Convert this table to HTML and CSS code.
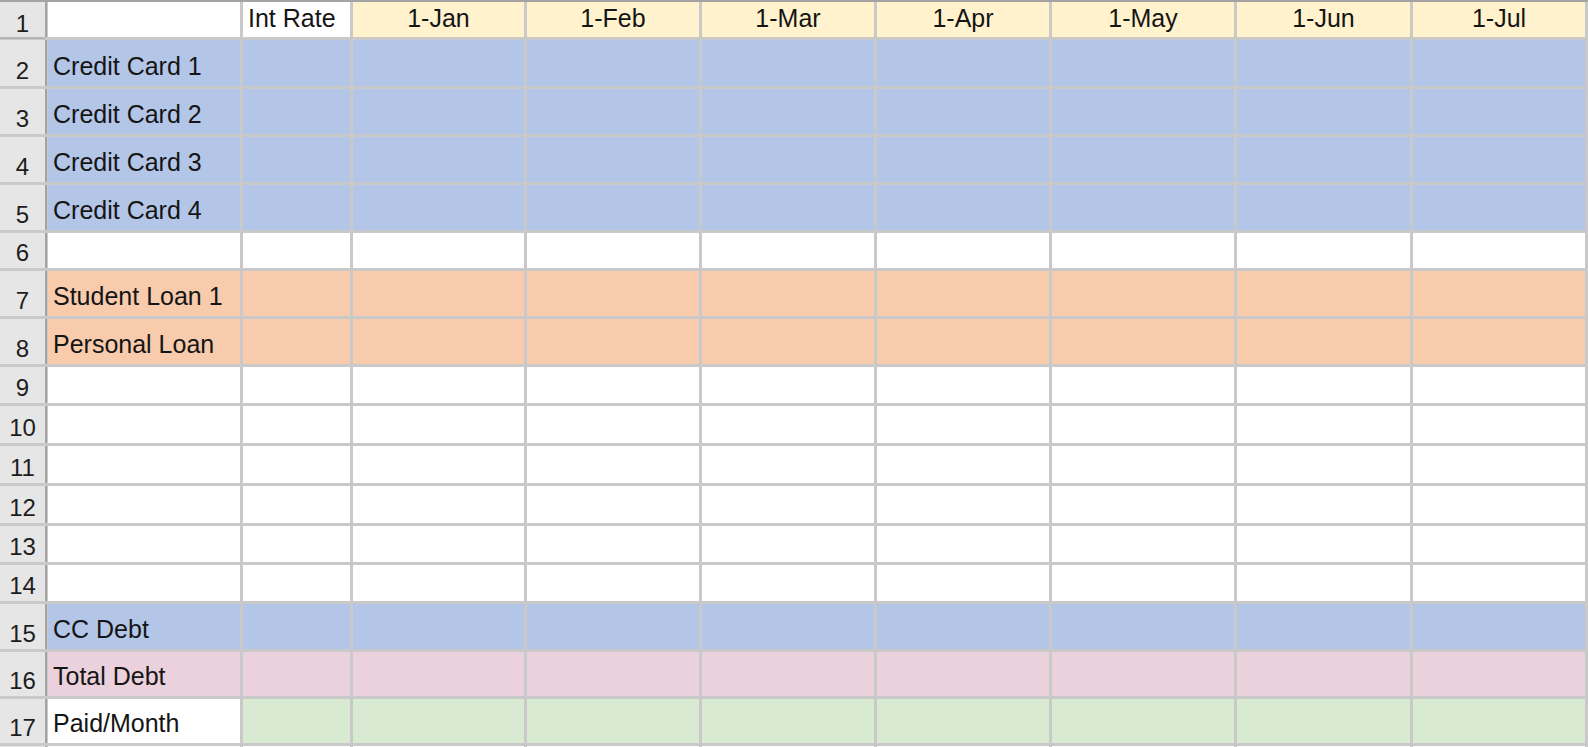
FILE: index.html
```html
<!DOCTYPE html>
<html>
	<head>
		<meta charset="utf-8">
		<title>Debt Tracker</title>
		<link rel="stylesheet" href="styles.css">
	</head>
	<body>
		<div class="sheet">
			<div class="row head">
				<div class="num">1</div>
				<div class="cell plain"></div>
				<div class="cell plain">Int Rate</div>
				<div class="cell date">1-Jan</div>
				<div class="cell date">1-Feb</div>
				<div class="cell date">1-Mar</div>
				<div class="cell date">1-Apr</div>
				<div class="cell date">1-May</div>
				<div class="cell date">1-Jun</div>
				<div class="cell date">1-Jul</div>
			</div>
			<div class="row blue">
				<div class="num">2</div>
				<div class="cell">Credit Card 1</div>
				<div class="cell"></div><div class="cell"></div><div class="cell"></div><div class="cell"></div>
				<div class="cell"></div><div class="cell"></div><div class="cell"></div><div class="cell"></div>
			</div>
			<div class="row blue">
				<div class="num">3</div>
				<div class="cell">Credit Card 2</div>
				<div class="cell"></div><div class="cell"></div><div class="cell"></div><div class="cell"></div>
				<div class="cell"></div><div class="cell"></div><div class="cell"></div><div class="cell"></div>
			</div>
			<div class="row blue">
				<div class="num">4</div>
				<div class="cell">Credit Card 3</div>
				<div class="cell"></div><div class="cell"></div><div class="cell"></div><div class="cell"></div>
				<div class="cell"></div><div class="cell"></div><div class="cell"></div><div class="cell"></div>
			</div>
			<div class="row blue">
				<div class="num">5</div>
				<div class="cell">Credit Card 4</div>
				<div class="cell"></div><div class="cell"></div><div class="cell"></div><div class="cell"></div>
				<div class="cell"></div><div class="cell"></div><div class="cell"></div><div class="cell"></div>
			</div>
			<div class="row">
				<div class="num">6</div>
				<div class="cell"></div>
				<div class="cell"></div><div class="cell"></div><div class="cell"></div><div class="cell"></div>
				<div class="cell"></div><div class="cell"></div><div class="cell"></div><div class="cell"></div>
			</div>
			<div class="row orange">
				<div class="num">7</div>
				<div class="cell">Student Loan 1</div>
				<div class="cell"></div><div class="cell"></div><div class="cell"></div><div class="cell"></div>
				<div class="cell"></div><div class="cell"></div><div class="cell"></div><div class="cell"></div>
			</div>
			<div class="row orange">
				<div class="num">8</div>
				<div class="cell">Personal Loan</div>
				<div class="cell"></div><div class="cell"></div><div class="cell"></div><div class="cell"></div>
				<div class="cell"></div><div class="cell"></div><div class="cell"></div><div class="cell"></div>
			</div>
			<div class="row">
				<div class="num">9</div>
				<div class="cell"></div>
				<div class="cell"></div><div class="cell"></div><div class="cell"></div><div class="cell"></div>
				<div class="cell"></div><div class="cell"></div><div class="cell"></div><div class="cell"></div>
			</div>
			<div class="row">
				<div class="num">10</div>
				<div class="cell"></div>
				<div class="cell"></div><div class="cell"></div><div class="cell"></div><div class="cell"></div>
				<div class="cell"></div><div class="cell"></div><div class="cell"></div><div class="cell"></div>
			</div>
			<div class="row">
				<div class="num">11</div>
				<div class="cell"></div>
				<div class="cell"></div><div class="cell"></div><div class="cell"></div><div class="cell"></div>
				<div class="cell"></div><div class="cell"></div><div class="cell"></div><div class="cell"></div>
			</div>
			<div class="row">
				<div class="num">12</div>
				<div class="cell"></div>
				<div class="cell"></div><div class="cell"></div><div class="cell"></div><div class="cell"></div>
				<div class="cell"></div><div class="cell"></div><div class="cell"></div><div class="cell"></div>
			</div>
			<div class="row">
				<div class="num">13</div>
				<div class="cell"></div>
				<div class="cell"></div><div class="cell"></div><div class="cell"></div><div class="cell"></div>
				<div class="cell"></div><div class="cell"></div><div class="cell"></div><div class="cell"></div>
			</div>
			<div class="row">
				<div class="num">14</div>
				<div class="cell"></div>
				<div class="cell"></div><div class="cell"></div><div class="cell"></div><div class="cell"></div>
				<div class="cell"></div><div class="cell"></div><div class="cell"></div><div class="cell"></div>
			</div>
			<div class="row blue">
				<div class="num">15</div>
				<div class="cell">CC Debt</div>
				<div class="cell"></div><div class="cell"></div><div class="cell"></div><div class="cell"></div>
				<div class="cell"></div><div class="cell"></div><div class="cell"></div><div class="cell"></div>
			</div>
			<div class="row pink">
				<div class="num">16</div>
				<div class="cell">Total Debt</div>
				<div class="cell"></div><div class="cell"></div><div class="cell"></div><div class="cell"></div>
				<div class="cell"></div><div class="cell"></div><div class="cell"></div><div class="cell"></div>
			</div>
			<div class="row green">
				<div class="num">17</div>
				<div class="cell plain">Paid/Month</div>
				<div class="cell"></div><div class="cell"></div><div class="cell"></div><div class="cell"></div>
				<div class="cell"></div><div class="cell"></div><div class="cell"></div><div class="cell"></div>
			</div>
			<div class="row last">
				<div class="num"></div>
				<div class="cell"></div>
				<div class="cell"></div><div class="cell"></div><div class="cell"></div><div class="cell"></div>
				<div class="cell"></div><div class="cell"></div><div class="cell"></div><div class="cell"></div>
			</div>
		</div>
	</body>
</html>
```

FILE: styles.css
```css
html, body{ margin:0; padding:0; }
body{ height:747px; overflow:hidden; background:#fff; font-family:"Liberation Sans", Arial, sans-serif; color:#151515; }

.sheet{ display:grid; gap:3px; padding-right:3px; border-top:2px solid #a3a3a3; background-color:#c9c9c9;
	grid-template-columns:45px 192px 107px 171px 172px 172px 172px 182px 173px 172px;
	grid-template-rows:35px 46px 45px 45px 45px 35px 45px 45px 36px 37px 37px 37px 36px 36px 45px 44px 44px 1px; }
.row{ display:contents; }

.num{ display:flex; align-items:flex-end; justify-content:center; padding-bottom:3px; background-color:#e6e6e6; box-shadow:2px 0 0 #a3a3a3; font-size:24px; line-height:24px; color:#1d1d1d; }
.row.head .num{ padding-bottom:1px; box-shadow:2px 0 0 #a3a3a3, 0 2px 0 #b5b5b5; }

.cell{ display:flex; align-items:flex-end; padding:0 0 7px 5px; background-color:#fff; font-size:25px; line-height:25px; white-space:nowrap; overflow:hidden; }
.row.head .cell{ padding-bottom:6px; }
.row.head .cell.date{ justify-content:center; padding-left:0; background-color:#fff2cc; }
.row.last .num, .row.last .cell{ padding:0; }

.row.blue .cell{ background-color:#b4c6e7; }
.row.orange .cell{ background-color:#f8cbad; }
.row.pink .cell{ background-color:#ead1dc; }
.row.green .cell{ background-color:#d9ead3; }
.row .cell.plain{ background-color:#fff; }
```
